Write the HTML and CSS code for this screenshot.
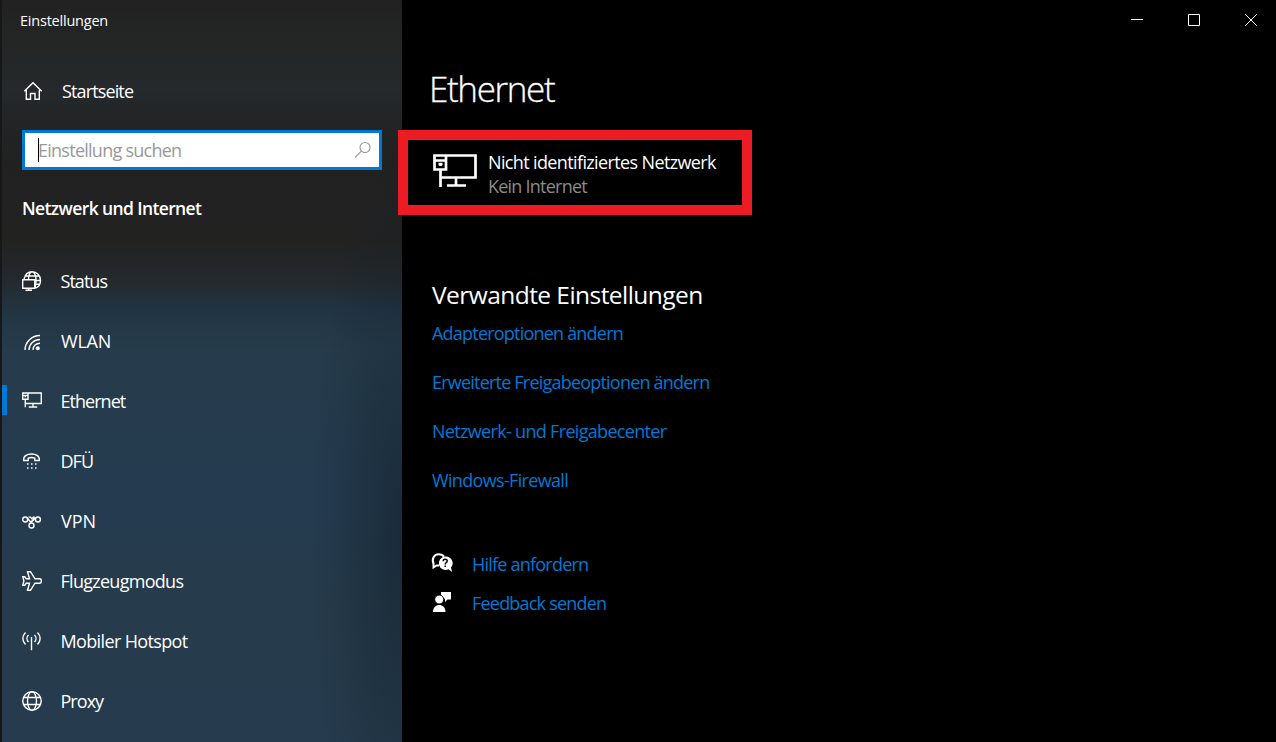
FILE: index.html
```html
<!DOCTYPE html>
<html lang="de">
<head>
<meta charset="utf-8">
<title>Einstellungen</title>
<link rel="stylesheet" href="styles.css">
</head>
<body>
<div class="window">
  <aside class="sidebar">
    <div class="caption"><span class="t-caption">Einstellungen</span></div>
    <a class="home">
      <svg class="icon" width="20" height="20" viewBox="0 0 20 20"><path d="M1.300 10.200 10 1.800l8.700 8.400M3.300 9v9.200h4.200v-5.700h4.500v5.700h4.300V9"/></svg>
      <span class="t-home">Startseite</span>
    </a>
    <div class="search">
      <span class="caret"></span><span class="placeholder">Einstellung suchen</span>
      <svg class="glass" width="18" height="18" viewBox="0 0 18 18"><circle cx="11" cy="6.500" r="5"/><path d="M7.300 10.200 1 16.500"/></svg>
    </div>
    <h2 class="category"><span>Netzwerk und Internet</span></h2>
    <nav class="nav">
      <a class="item"><svg class="icon" width="20" height="20" viewBox="0 0 20 20"><path d="M2 8C3 4 6 .8 10 .8c4.800 0 8.500 3.700 8.500 8.600 0 4.200-2 6.600-5 7.800M6.500 8.500C6.500 4 8 .8 10 .8c2.500 0 4 4 4 8.200 0 3-.2 6-1 8M3.500 5h14M13 9.500h5.500M13 13.300h4.500"/><path d="M.7 8.700h12v8.500H.7zM6.700 17v2.300M3.500 19.300h6.500"/></svg><span class="t-status">Status</span></a>
      <a class="item"><svg class="icon" width="20" height="20" viewBox="0 0 20 20"><path d="M3 19C3 11 10 4.500 18 4.500M7 19c0-6 5-10.500 11-10.500M11 19c0-4 3-6.800 7-6.800"/><circle class="solid" cx="15.800" cy="17.200" r="2"/></svg><span class="t-wlan">WLAN</span></a>
      <a class="item active"><svg class="icon" width="20" height="20" viewBox="0 0 20 20"><path d="M6 2h13.300v10.500H4M.7 2H6v6.300H.7zM.7 4.500H6M3.300 8.300v8M11 12.500v3.400M6.700 16h8.500"/><path d="M3.300 4.500v1.700"/></svg><span class="t-ethernet">Ethernet</span></a>
      <a class="item"><svg class="icon" width="20" height="20" viewBox="0 0 20 20"><path d="M1.700 9.500C1 5 5 3 9.500 3S18 5 17.300 9.500h-4.500V7.200c-2-.8-4.600-.8-6.600 0v2.300z"/><path class="dots" d="M5 13h1.500m2.500 0h1.500m2.500 0h1.500M5 17h1.500m2.500 0h1.500m2.500 0h1.500"/></svg><span class="t-dfu">DFÜ</span></a>
      <a class="item"><svg class="icon" width="20" height="20" viewBox="0 0 20 20"><circle cx="3.200" cy="8.500" r="2.500"/><circle cx="15.900" cy="8.500" r="2.500"/><circle cx="9.500" cy="14.500" r="2.500"/><path d="M5 6.700l2.500 3c1 1.300 2 1.500 3.500-.2L14 6.500M8 12.500l4.500-5.500M6.500 6.100h2l1.300 1.600 1.500-1.600h1.500"/></svg><span class="t-vpn">VPN</span></a>
      <a class="item"><svg class="icon" width="20" height="20" viewBox="0 0 20 20"><path d="M5.500.7h3L13 7.800h4.500c2.500 0 2.500 4.400 0 4.400H13L8.500 19.300h-3l2-7.100H4.300l-1.500 2H.8L1.900 10 .8 5.800h2l1.500 2h3.200z"/></svg><span class="t-flug">Flugzeugmodus</span></a>
      <a class="item"><svg class="icon" width="20" height="20" viewBox="0 0 20 20"><path d="M9.500 6v13.300M3.500 1.500C0 5 0 10 3.500 13.500M15.500 1.500C19 5 19 10 15.500 13.500M6.500 4c-2 2-2 5 0 7M12.500 4c2 2 2 5 0 7"/></svg><span class="t-hotspot">Mobiler Hotspot</span></a>
      <a class="item"><svg class="icon" width="20" height="20" viewBox="0 0 20 20"><circle cx="10" cy="10" r="9.200"/><ellipse cx="10" cy="10" rx="4.500" ry="9.200"/><path d="M1.500 6.500h17M1.500 13.500h17"/></svg><span class="t-proxy">Proxy</span></a>
    </nav>
  </aside>
  <main class="main">
    <div class="controls">
      <svg width="12" height="12" viewBox="0 0 12 12"><path d="M0 5.500h12"/></svg>
      <svg width="12" height="12" viewBox="0 0 12 12"><path d="M.5.500h11v11H.5z"/></svg>
      <svg width="12" height="12" viewBox="0 0 12 12"><path d="m.2.200 11.600 11.600M11.800.2.200 11.800"/></svg>
    </div>
    <h1 class="title"><span>Ethernet</span></h1>
    <section class="network">
      <svg class="monitor" width="44" height="34" viewBox="0 0 44 34"><path d="M13 1.500h29.500v22H7M1.500 1.500H13v14H1.500zM1 6.500h12M7.500 15.500V33M23 24v7M14 31.500h19"/><path d="M5.500 10h4M7.500 9v3"/></svg>
      <div class="network-text"><span class="t-net">Nicht identifiziertes Netzwerk</span><span class="t-none">Kein Internet</span></div>
    </section>
    <h2 class="related"><span>Verwandte Einstellungen</span></h2>
    <ul class="links">
      <li><a class="l-adapter">Adapteroptionen ändern</a></li>
      <li><a class="l-share">Erweiterte Freigabeoptionen ändern</a></li>
      <li><a class="l-center">Netzwerk- und Freigabecenter</a></li>
      <li><a class="l-firewall">Windows-Firewall</a></li>
    </ul>
    <div class="support">
      <a class="support-row"><svg width="22" height="22" viewBox="0 0 22 22"><path class="outline" d="M7 12.500H4.500L1.500 14.500v-3.800C-.5 6 2 1.200 6.500 1.200c3 0 4.700 1 5.500 2.500"/><path class="fill" d="M13.200 3.500a6.700 6.700 0 1 0 3.300 12.700l3.500 2.800-1-4.500a6.700 6.700 0 0 0-5.800-11z"/><path class="question" d="M11.200 8.200c0-2.800 4-2.600 4-.3 0 1.700-2 1.600-2 3.500m0 1.200v1.500"/></svg><span class="l-help">Hilfe anfordern</span></a>
      <a class="support-row"><svg width="22" height="22" viewBox="0 0 22 22"><path class="fill" d="M9 0h10v7.500h-3.500L13 10V7L9 4z"/><circle class="head" cx="7.200" cy="7.500" r="4.500"/><path class="fill" d="M1 20c0-9.500 12.500-9.500 12.500 0z"/></svg><span class="l-feedback">Feedback senden</span></a>
    </div>
  </main>
</div>
</body>
</html>
```
FILE: styles.css
```css
* { box-sizing: border-box; }
body { margin: 0; background: #000; color: #fff; font: 18px/24px "Open Sans", "Noto Sans", sans-serif; overflow: hidden; }
h1, h2, ul { margin: 0; padding: 0; font-weight: 400; list-style: none; }
span, a { white-space: nowrap; }
svg { fill: none; stroke: #fff; flex: none; overflow: visible; }
.window { display: flex; width: 1276px; height: 742px; }
.sidebar {
  width: 402px; flex: none; border-left: 2px solid #151719; display: flex; flex-direction: column;
  background:
    radial-gradient(ellipse 90px 400px at 100% 540px, rgba(14, 28, 38, .5), rgba(14, 28, 38, .2) 55%, transparent 100%),
    linear-gradient(180deg, #212121 0, #242626 45px, #25292b 90px, #222425 125px, #212121 160px, #222221 240px, #24292d 280px, #223543 312px, #263b4b 350px, #253b50 500px, #263b4b 600px, #263b4e 742px);
}
.caption { height: 40px; padding-left: 18px; font-size: 14.500px; line-height: 41px; }
.home { height: 24px; margin-top: 39px; padding-left: 21px; display: flex; align-items: center; gap: 19px; }
.icon { stroke-width: 1.400; }
.solid { fill: #fff; stroke: none; }
.dots { stroke-width: 1.500; }
.search { width: 360px; height: 40px; margin: 27px 0 0 20px; border: 3px solid #0078d7; background: #fff; color: #999; display: flex; align-items: center; padding: 0 7px 0 13px; }
.caret { width: 1px; height: 24px; background: #000; }
.placeholder { margin-left: -1px; }
.glass { margin-left: auto; stroke: #999; stroke-width: 1.100; }
.category { margin: 26px 0 0 20px; height: 24px; font-size: 17.500px; font-weight: 600; line-height: 24px; }
.nav { margin-top: 31px; }
.item { height: 60px; padding-left: 20px; display: flex; align-items: center; gap: 18.500px; }
.active { background: linear-gradient(#0078d7, #0078d7) 0 14px / 5px 30px no-repeat; }
.main { flex: 1; padding-left: 30px; }
.controls { height: 40px; padding: 0 19px 0 0; display: flex; align-items: center; justify-content: flex-end; gap: 45px; }
.title { height: 48px; margin: 25px 0 0 -3px; font-size: 35px; font-weight: 300; line-height: 48px; -webkit-text-stroke: .3px #fff; }
.network { position: relative; width: 354px; height: 85px; margin: 17px 0 0 -34px; padding: 0 0 3px 25px; border: 10px solid #ed1c24; background: #000; display: flex; align-items: center; gap: 11px; }
.monitor { stroke-width: 2.700; }
.network-text { display: flex; flex-direction: column; padding-top: 5px; }
.t-none { color: #8b8b8b; }
.related { height: 36px; margin-top: 62px; font-size: 24.500px; line-height: 35px; }
.links { margin-top: 8px; display: grid; gap: 25px; color: #0078d7; }
.links li { height: 24px; }
.support { margin-top: 60px; display: grid; gap: 15px; color: #0078d7; }
.support-row { display: flex; align-items: center; gap: 18px; height: 24px; }
.fill { fill: #fff; stroke: none; }
.outline { stroke-width: 2; }
.question { stroke: #000; stroke-width: 1.500; }
.head { fill: #fff; stroke: #000; stroke-width: 1; }

/* Tracking */
.t-caption { letter-spacing: -.22px; }
.t-home { letter-spacing: -.87px; }
.placeholder { letter-spacing: -.74px; }
.category { letter-spacing: -.62px; }
.t-status, .t-ethernet, .t-dfu, .t-proxy { letter-spacing: -.96px; }
.t-wlan { letter-spacing: -.2px; margin-left: .5px; }
.t-vpn { margin-left: .5px; }
.t-flug { letter-spacing: -.72px; }
.t-hotspot { letter-spacing: -.64px; }
.title { letter-spacing: -1.350px; }
.t-net { letter-spacing: -.63px; }
.t-none { letter-spacing: -.77px; }
.related { letter-spacing: -.55px; }
.l-adapter, .l-share, .l-feedback { letter-spacing: -.79px; }
.l-center { letter-spacing: -.68px; }
.l-firewall { letter-spacing: -.66px; }
.l-help { letter-spacing: -.78px; }
```
